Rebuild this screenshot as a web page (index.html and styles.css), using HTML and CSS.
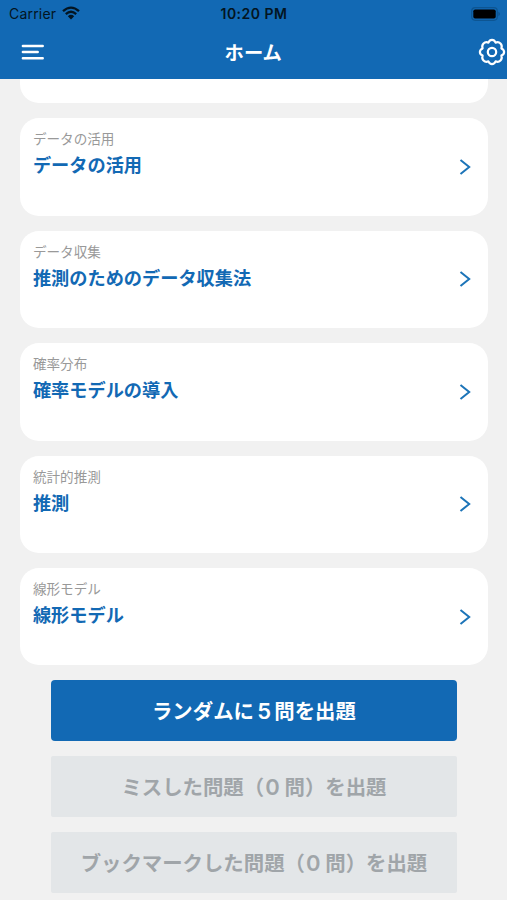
FILE: index.html
```html
<!DOCTYPE html>
<html lang="ja">

<head>
  <meta charset="UTF-8">
  <meta name="viewport" content="width=device-width, initial-scale=1.0">
  <title>ホーム</title>
  <link rel="stylesheet" href="styles.css">
</head>

<body>
  <header class="header">
    <div class="status">
      <div class="carrier">
        <span>Carrier</span>
        <svg class="wifi" width="18" height="14" viewBox="0 0 18 14">
          <path d="M1 5.2Q9-2 17 5.2M3.8 8.1Q9 3.5 14.2 8.1" fill="none" stroke="#031522" stroke-width="2.3" />
          <path d="M5.8 10.2Q9 7.4 12.2 10.2L9 13.5Z" fill="#031522" />
        </svg>
      </div>
      <span class="time">10:20 PM</span>
      <svg class="battery" width="30" height="14" viewBox="0 0 30 14">
        <rect x=".7" y=".7" width="25.6" height="12.6" rx="3.5" fill="none" stroke="#0d5592" stroke-width="1.2" />
        <rect x="2.3" y="2.4" width="22.4" height="9.2" rx="1.8" fill="#000" />
        <path d="M27.5 4.8Q30 7 27.5 9.2Z" fill="#0d4c83" />
      </svg>
    </div>
    <div class="nav">
      <svg class="menu" width="24" height="18" viewBox="0 0 24 18">
        <path d="M1.9 3H21.7M1.9 9.1H16.7M1.9 15.2H21.7" fill="none" stroke="#fff" stroke-width="2.5" stroke-linecap="round" />
      </svg>
      <h1 class="nav-title">ホーム</h1>
      <svg class="gear" width="28" height="28" viewBox="0 0 28 28" fill="none" stroke="#fff" stroke-width="2.2" stroke-linejoin="round">
        <path d="M10.4 4.6C12 1 16 1 17.6 4.6C21.5 3.2 24.8 6.5 23.4 10.4C27 12 27 16 23.4 17.6C24.8 21.5 21.5 24.8 17.6 23.4C16 27 12 27 10.4 23.4C6.5 24.8 3.2 21.5 4.6 17.6C1 16 1 12 4.6 10.4C3.2 6.5 6.5 3.2 10.4 4.6Z" />
        <circle cx="14" cy="14" r="4.2" />
      </svg>
    </div>
  </header>

  <main class="content">
    <div class="card card-first"></div>
    <div class="card">
      <div class="text">
        <p class="category">データの活用</p>
        <h2 class="title">データの活用</h2>
      </div>
      <svg class="arrow" width="12" height="18" viewBox="0 0 12 18">
        <path d="M1.5 2L10.2 9L1.5 16" />
      </svg>
    </div>
    <div class="card">
      <div class="text">
        <p class="category">データ収集</p>
        <h2 class="title">推測のためのデータ収集法</h2>
      </div>
      <svg class="arrow" width="12" height="18" viewBox="0 0 12 18">
        <path d="M1.5 2L10.2 9L1.5 16" />
      </svg>
    </div>
    <div class="card">
      <div class="text">
        <p class="category">確率分布</p>
        <h2 class="title">確率モデルの導入</h2>
      </div>
      <svg class="arrow" width="12" height="18" viewBox="0 0 12 18">
        <path d="M1.5 2L10.2 9L1.5 16" />
      </svg>
    </div>
    <div class="card">
      <div class="text">
        <p class="category">統計的推測</p>
        <h2 class="title">推測</h2>
      </div>
      <svg class="arrow" width="12" height="18" viewBox="0 0 12 18">
        <path d="M1.5 2L10.2 9L1.5 16" />
      </svg>
    </div>
    <div class="card">
      <div class="text">
        <p class="category">線形モデル</p>
        <h2 class="title">線形モデル</h2>
      </div>
      <svg class="arrow" width="12" height="18" viewBox="0 0 12 18">
        <path d="M1.5 2L10.2 9L1.5 16" />
      </svg>
    </div>

    <div class="buttons">
      <button class="btn">ランダムに<span class="num">5</span>問を出題</button>
      <button class="btn" disabled>ミスした問題（<span class="num num-zero">0</span>問）を出題</button>
      <button class="btn" disabled>ブックマークした問題（<span class="num num-zero">0</span>問）を出題</button>
    </div>
  </main>
</body>

</html>
```

FILE: styles.css
```css
* {
  padding: 0;
  margin: 0;
  box-sizing: border-box;
}

body {
  height: 900px;
  overflow: hidden;
  background-color: #f1f1f1;
  font-family: Inter, "Noto Sans CJK JP", sans-serif;
}

.header {
  height: 79px;
  background-color: #1269b4;
}

.status {
  display: grid;
  grid-template-columns: 1fr auto 1fr;
  align-items: center;
  height: 27px;
  padding: 0 6px 0 9px;
  color: #031522;
  font-size: 14px;
  line-height: 27px;
}

.carrier {
  display: flex;
  align-items: center;
  gap: 6px;
  letter-spacing: .2px;
}

.wifi {
  margin-bottom: 1px;
}

.time {
  margin-left: -2px;
  font-weight: 600;
  letter-spacing: .5px;
}

.battery {
  justify-self: end;
}

.nav {
  display: grid;
  grid-template-columns: 1fr auto 1fr;
  align-items: center;
  height: 50px;
  padding: 0 1px 0 20.5px;
}

.nav-title {
  color: #fff;
  font-size: 19.3px;
  font-weight: 700;
  line-height: 28px;
  margin-left: -20px;
  padding-top: 1px;
}

.gear {
  justify-self: end;
}

.content {
  display: flex;
  flex-direction: column;
  gap: 15px;
  padding: 0 19.5px 0 20.4px;
}

.card {
  display: flex;
  align-items: center;
  justify-content: space-between;
  flex-shrink: 0;
  height: 97.4px;
  padding: 0 17px 0 12.5px;
  background-color: #fff;
  border-radius: 19px;
}

.card-first {
  height: 24.4px;
  border-radius: 0 0 19px 19px;
}

.text {
  align-self: flex-start;
  padding-top: 11px;
}

.category {
  color: #999;
  font-size: 13.6px;
  line-height: 21px;
}

.title {
  color: #1269b4;
  font-size: 18.2px;
  font-weight: 700;
  line-height: 30px;
}

.arrow {
  fill: none;
  stroke: #1c74b8;
  stroke-width: 2;
}

.buttons {
  display: flex;
  flex-direction: column;
  gap: 15px;
  padding: 0 31px;
}

.btn {
  height: 61px;
  padding-top: 2px;
  border: none;
  border-radius: 4px;
  background-color: #1269b4;
  color: #fff;
  font-family: inherit;
  font-size: 20.4px;
  font-weight: 700;
  line-height: 30px;
  white-space: nowrap;
}

.btn:disabled {
  border-radius: 2px;
  background-color: #e3e6e8;
  color: #a0a5a9;
}

.num {
  display: inline-block;
  width: 20.4px;
  font-size: 22px;
  font-weight: 600;
  text-align: center;
}

.num-zero {
  padding-left: 1px;
  text-align: left;
}
```
